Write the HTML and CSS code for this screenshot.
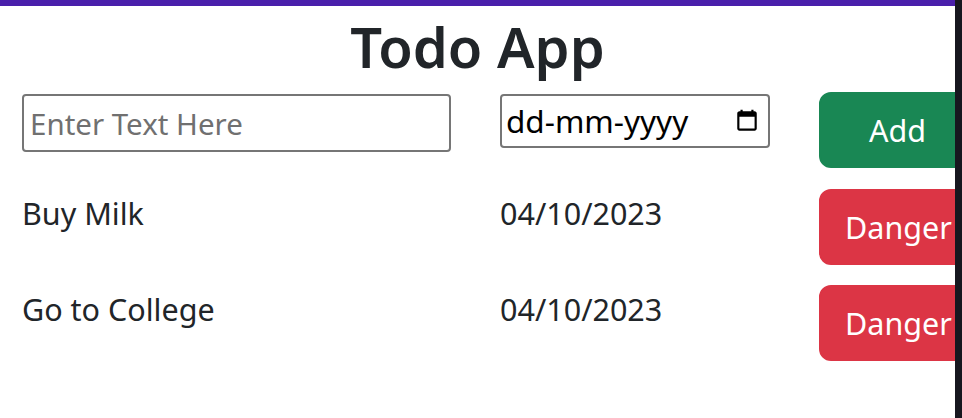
FILE: index.html
```html
<!DOCTYPE html>
<html lang="en">
<head>
<meta charset="utf-8">
<title>Todo App</title>
<link rel="stylesheet" href="styles.css">
</head>
<body>
<div class="page">
  <main class="main">
    <div class="topbar"></div>
    <h1 class="title">Todo App</h1>
    <div class="row form-row">
      <div class="col"><input class="text-input" type="text" placeholder="Enter Text Here"></div>
      <div class="col">
        <div class="date-input">
          <span class="date-text">dd-mm-yyyy</span>
          <svg class="cal-icon" viewBox="0 0 24 24" width="26" height="26" aria-hidden="true"><path d="M19 3h-1V1.5h-2V3H8V1.5H6V3H5C3.9 3 3 3.9 3 5v14c0 1.1.9 2 2 2h14c1.1 0 2-.9 2-2V5c0-1.1-.9-2-2-2zm0 16H5V8h14v11z" fill="#000"/></svg>
        </div>
      </div>
      <div class="col"><button class="btn btn-add">Add</button></div>
    </div>
    <div class="row item-row">
      <div class="col">Buy Milk</div>
      <div class="col">04/10/2023</div>
      <div class="col"><button class="btn btn-danger">Danger</button></div>
    </div>
    <div class="row item-row">
      <div class="col">Go to College</div>
      <div class="col">04/10/2023</div>
      <div class="col"><button class="btn btn-danger">Danger</button></div>
    </div>
  </main>
  <div class="scrollbar"></div>
</div>
</body>
</html>
```
FILE: styles.css
```css
* { box-sizing: border-box; }
html, body { margin: 0; padding: 0; }
body {
  font-family: "Noto Sans", "Open Sans", sans-serif;
  font-size: 30.5px;
  line-height: 48px;
  color: #212529;
  background: #fff;
  height: 418px;
  overflow: hidden;
}
.page {
  display: flex;
  height: 418px;
}
.main {
  flex: 0 0 955px;
  width: 955px;
  overflow: hidden;
}
.scrollbar {
  flex: 1;
  background: #17171f;
}
.topbar {
  height: 6px;
  background: #4a1fab;
}
.title {
  margin: 0;
  text-align: center;
  font-size: 56px;
  font-weight: 600;
  line-height: 1.2;
  padding-top: 7px;
  height: 86px;
}
.row {
  display: grid;
  grid-template-columns: 478px 319px 200px;
  padding-left: 22px;
}
.col {
  white-space: nowrap;
}
.form-row {
  margin-bottom: 21px;
}
.item-row {
  height: 76px;
  margin-bottom: 20px;
}
.text-input {
  display: block;
  margin-top: 2px;
  width: 429px;
  height: 58px;
  border: 2px solid #767676;
  border-radius: 4px;
  padding: 2px 6px;
  font-family: inherit;
  font-size: 29.5px;
  color: #212529;
  outline: none;
}
.text-input::placeholder { color: #707070; }
.date-input {
  margin-top: 2px;
  width: 270px;
  height: 54px;
  border: 2px solid #767676;
  border-radius: 4px;
  padding: 0 8px 0 4px;
  display: flex;
  align-items: center;
  justify-content: space-between;
  color: #000;
  font-size: 31.5px;
}
.date-text { line-height: 1; }
.cal-icon { display: block; }
.btn {
  display: inline-block;
  font-family: inherit;
  font-size: 30.5px;
  line-height: 48px;
  padding: 12px 24px;
  border: 2px solid transparent;
  border-radius: 12px;
  color: #fff;
  cursor: pointer;
}
.btn-add {
  background: #198754;
  border-color: #198754;
  padding-left: 48px;
  padding-right: 48px;
}
.btn-danger {
  background: #dc3545;
  border-color: #dc3545;
}
```
